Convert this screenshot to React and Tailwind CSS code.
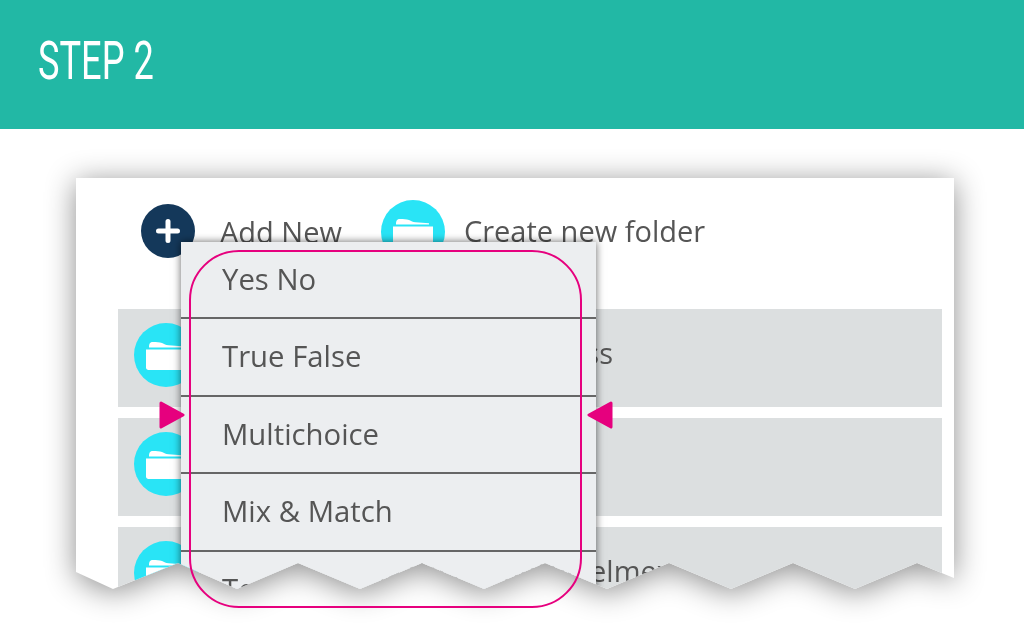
function FolderBadge({ className = "" }) {
  return (
    <div className={`w-[64px] h-[64px] rounded-full bg-[#29e4f6] flex items-center justify-center shrink-0 ${className}`}>
      <svg width="40" height="29" viewBox="0 0 40 29" fill="none">
        <path d="M3 6.5C3 2.5 4 1 7 1c3.5 0 6.5 0 9 1 2.5 1 3.5 2 6.5 2.3 4.5.4 9 .5 13.5 1v1.2H3z" fill="#fff" />
        <path d="M0 8.5h40v18c0 1.4-1 2.5-2.5 2.5h-35C1 29 0 27.9 0 26.5z" fill="#fff" />
      </svg>
    </div>
  );
}

function Row({ text, width, className = "" }) {
  return (
    <div className={`h-[98px] bg-[#dcdfe0] flex items-start pl-[16px] pt-[14px] ${className}`}>
      <FolderBadge />
      <div className={`${width} text-right text-[29px] leading-[60px] text-[#555555] whitespace-nowrap`}>{text}</div>
    </div>
  );
}

const items = ["Yes No", "True False", "Multichoice", "Mix & Match", "Text"];

export default function App() {
  return (
    <div className="relative w-[1024px] h-[627px] overflow-hidden bg-white font-['Open_Sans',sans-serif]">
      <header className="h-[129px] bg-[#22b8a5] pl-[38px] pt-[22px]">
        <h1 className="origin-left scale-x-[0.67] text-white text-[54px] leading-[78px] font-[400] font-['Roboto',sans-serif]">STEP 2</h1>
      </header>

      <div className="ml-[76px] mt-[49px] w-[878px] h-[440px] drop-shadow-[0_4px_15px_rgba(0,0,0,0.45)]">
        <div className="relative h-[411px] bg-white [clip-path:polygon(0_0,878px_0,878px_400px,841px_385px,779px_411px,717px_385px,655px_411px,593px_385px,531px_411px,469px_385px,408px_411px,346px_385px,284px_411px,222px_385px,161px_411px,102px_385px,37px_411px,0_394px)]">
          <div className="flex items-start h-[131px] pl-[65px] pt-[22px]">
            <div className="mt-[4px] w-[54px] h-[54px] rounded-full bg-[#14385a] flex items-center justify-center shrink-0">
              <svg width="26" height="26" viewBox="0 0 26 26"><path d="M13 3.5v19M3.5 13h19" stroke="#fff" strokeWidth="5" strokeLinecap="round" /></svg>
            </div>
            <span className="ml-[25px] mt-[2px] text-[29px] leading-[60px] text-[#555555] whitespace-nowrap">Add New</span>
            <FolderBadge className="ml-[39px]" />
            <span className="ml-[19px] mt-[1px] text-[29px] leading-[60px] text-[#555555] whitespace-nowrap">Create new folder</span>
          </div>
          <div className="ml-[42px] mr-[12px] flex flex-col gap-[11px]">
            <Row text="Business Process" width="w-[415px]" />
            <Row text="" width="w-[415px]" />
            <Row text="Colgate Palmolive elmex" width="w-[474px]" />
          </div>
          <div className="absolute left-[105px] top-[64px] w-[415px] bg-[#eceef0] shadow-[0_0_8px_rgba(0,0,0,0.6)] text-[29.3px] text-[#555555]">
            {items.map((t) => (
              <div key={t} className="h-[77.4px] pl-[41px] border-b-2 border-[#666666] leading-[74px] whitespace-nowrap">{t}</div>
            ))}
          </div>
        </div>
      </div>

      <div className="absolute left-[189px] top-[250px] w-[393px] h-[358px] rounded-[50px] border-2 border-[#e6007e]" />
      <svg className="absolute left-[159px] top-[400px]" width="26" height="30" viewBox="0 0 26 30">
        <path d="M2 3L24 15L2 27Z" fill="#e6007e" stroke="#e6007e" strokeWidth="3" strokeLinejoin="round" />
      </svg>
      <svg className="absolute left-[587px] top-[400px]" width="26" height="30" viewBox="0 0 26 30">
        <path d="M24 3L2 15L24 27Z" fill="#e6007e" stroke="#e6007e" strokeWidth="3" strokeLinejoin="round" />
      </svg>
    </div>
  );
}
